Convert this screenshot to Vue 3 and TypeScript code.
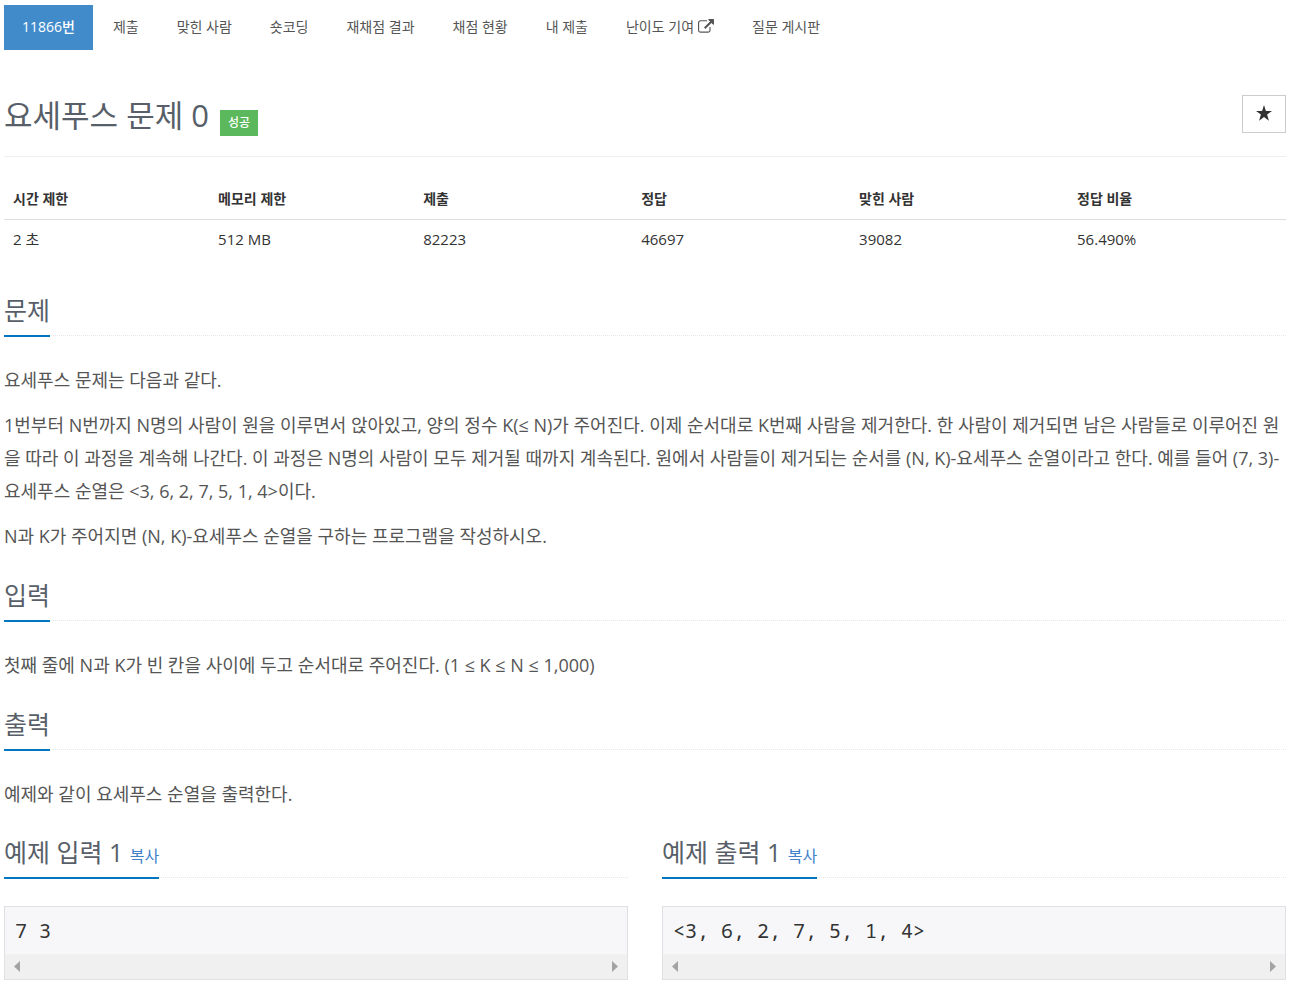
<script setup lang="ts">
interface Tab { label: string; active?: boolean; external?: boolean }
const tabs: Tab[] = [
  { label: '11866번', active: true },
  { label: '제출' },
  { label: '맞힌 사람' },
  { label: '숏코딩' },
  { label: '재채점 결과' },
  { label: '채점 현황' },
  { label: '내 제출' },
  { label: '난이도 기여', external: true },
  { label: '질문 게시판' },
]
const info: { name: string; value: string }[] = [
  { name: '시간 제한', value: '2 초' },
  { name: '메모리 제한', value: '512 MB' },
  { name: '제출', value: '82223' },
  { name: '정답', value: '46697' },
  { name: '맞힌 사람', value: '39082' },
  { name: '정답 비율', value: '56.490%' },
]
const sections: { title: string; paragraphs: string[] }[] = [
  {
    title: '문제',
    paragraphs: [
      '요세푸스 문제는 다음과 같다.',
      '1번부터 N번까지 N명의 사람이 원을 이루면서 앉아있고, 양의 정수 K(≤ N)가 주어진다. 이제 순서대로 K번째 사람을 제거한다. 한 사람이 제거되면 남은 사람들로 이루어진 원을 따라 이 과정을 계속해 나간다. 이 과정은 N명의 사람이 모두 제거될 때까지 계속된다. 원에서 사람들이 제거되는 순서를 (N, K)-요세푸스 순열이라고 한다. 예를 들어 (7, 3)-요세푸스 순열은 <3, 6, 2, 7, 5, 1, 4>이다.',
      'N과 K가 주어지면 (N, K)-요세푸스 순열을 구하는 프로그램을 작성하시오.',
    ],
  },
  { title: '입력', paragraphs: ['첫째 줄에 N과 K가 빈 칸을 사이에 두고 순서대로 주어진다. (1 ≤ K ≤ N ≤ 1,000)'] },
  { title: '출력', paragraphs: ['예제와 같이 요세푸스 순열을 출력한다.'] },
]
const samples: { title: string; data: string }[] = [
  { title: '예제 입력 1', data: '7 3' },
  { title: '예제 출력 1', data: '<3, 6, 2, 7, 5, 1, 4>' },
]
const copy = (text: string) => navigator.clipboard?.writeText(text)
</script>

<template>
  <main class="page">
    <nav class="tabs">
      <a v-for="t in tabs" :key="t.label" href="#" class="tab" :class="{ active: t.active }">
        {{ t.label }}
        <svg v-if="t.external" class="ext" viewBox="0 0 1792 1792" aria-hidden="true">
          <path d="M1408 928v320q0 119-84.500 203.500t-203.500 84.500h-832q-119 0-203.500-84.500t-84.500-203.500v-832q0-119 84.500-203.500t203.500-84.500h704q14 0 23 9t9 23v64q0 14-9 23t-23 9h-704q-66 0-113 47t-47 113v832q0 66 47 113t113 47h832q66 0 113-47t47-113v-320q0-14 9-23t23-9h64q14 0 23 9t9 23zm384-864v512q0 26-19 45t-45 19-45-19l-176-176-652 652q-10 10-23 10t-23-10l-114-114q-10-10-10-23t10-23l652-652-176-176q-19-19-19-45t19-45 45-19h512q26 0 45 19t19 45z" />
        </svg>
      </a>
    </nav>

    <header class="head">
      <h1>요세푸스 문제 0</h1>
      <span class="badge">성공</span>
      <button class="star" type="button" aria-label="즐겨찾기">
        <svg viewBox="0 0 16 16" aria-hidden="true"><path d="M8 0l1.900 5.900h6.100l-4.900 3.700 1.800 6.100L8 12l-4.900 3.700 1.800-6.100L0 5.900h6.100z" /></svg>
      </button>
    </header>

    <table class="info">
      <thead><tr><th v-for="i in info" :key="i.name" scope="col">{{ i.name }}</th></tr></thead>
      <tbody><tr><td v-for="i in info" :key="i.name">{{ i.value }}</td></tr></tbody>
    </table>

    <section v-for="s in sections" :key="s.title" class="section">
      <div class="headline"><h2>{{ s.title }}</h2></div>
      <div class="text"><p v-for="p in s.paragraphs" :key="p">{{ p }}</p></div>
    </section>

    <div class="samples">
      <section v-for="s in samples" :key="s.title" class="sample">
        <div class="headline">
          <h2>{{ s.title }} <button class="copy" type="button" @click="copy(s.data)">복사</button></h2>
        </div>
        <div class="box">
          <pre>{{ s.data }}</pre>
          <div class="scroll" aria-hidden="true">
            <svg viewBox="0 0 6 11"><path d="M6 0v11L0 5.500z" /></svg>
            <svg viewBox="0 0 6 11"><path d="M0 0v11l6-5.500z" /></svg>
          </div>
        </div>
      </section>
    </div>
  </main>
</template>

<style>
body { margin: 0; background: #fff; }
</style>

<style scoped>
* { box-sizing: border-box; }
.page {
  padding: 5px 11px 12px 4px;
  color: #333;
  font-family: "Open Sans", "Noto Sans CJK KR", sans-serif;
  font-size: 14px;
  line-height: 20px;
}
.tabs { display: flex; gap: 2px; }
.tab {
  display: flex;
  align-items: center;
  gap: 4px;
  height: 45px;
  padding: 0 18px 2px;
  color: #555;
  font-size: 14px;
  text-decoration: none;
  white-space: nowrap;
}
.tab.active { background: #428bca; color: #fff; font-weight: 500; }
.ext { width: 16px; height: 16px; fill: currentColor; }
.head {
  display: flex;
  align-items: flex-start;
  height: 107px;
  padding-top: 45px;
  border-bottom: 1px solid #eee;
}
h1 { margin: 0; color: #585f69; font-size: 31px; font-weight: 400; line-height: 40px; }
.badge {
  margin: 15px 0 0 11px;
  padding: 0 8px;
  background: #5cb85c;
  color: #fff;
  font-size: 12px;
  font-weight: 500;
  line-height: 26px;
}
.star {
  display: grid;
  place-items: center;
  width: 44px;
  height: 38px;
  margin-left: auto;
  padding: 0 0 2px;
  border: 1px solid #ccc;
  background: #fff;
}
.star svg { width: 16px; height: 16px; fill: #333; }
.info {
  width: 100%;
  margin-top: 22px;
  border-collapse: collapse;
  table-layout: fixed;
  font-size: 15px;
}
.info th, .info td { height: 40px; padding: 0 9px; text-align: left; }
.info th { font-size: 14px; font-weight: 700; border-bottom: 1px solid #ddd; }
.info th:nth-child(-n + 2) { width: 16%; }
.headline { border-bottom: 1px dotted #e4e9f0; }
.headline h2 {
  display: block;
  width: fit-content;
  margin: 0 0 -2px;
  padding-bottom: 8px;
  border-bottom: 2px solid #0076c0;
  color: #585f69;
  font-size: 25px;
  font-weight: 400;
  line-height: 34px;
}
.section { margin-top: 34px; }
.section + .section { margin-top: 25px; }
.text { padding-top: 28px; color: #555; font-size: 18px; line-height: 33px; }
.text p { margin: 0 0 12px; }
.samples { display: grid; grid-template-columns: 1fr 1fr; gap: 34px; margin-top: 24px; }
.copy { padding: 0; border: 0; background: none; color: #4280ca; font: inherit; font-size: 16px; line-height: 16px; }
.box { margin-top: 28px; border: 1px solid #e0e0e5; background: #f7f7f9; }
pre { margin: 0; padding: 7px 10px; color: #333; font: 20px/33px "Noto Sans Mono", "Source Code Pro", "Liberation Mono", monospace; }
.scroll { display: flex; justify-content: space-between; align-items: center; height: 25px; padding: 0 9px; background: #f0f0f0; }
.scroll svg { width: 6px; height: 11px; fill: #a3a3a3; }
</style>
